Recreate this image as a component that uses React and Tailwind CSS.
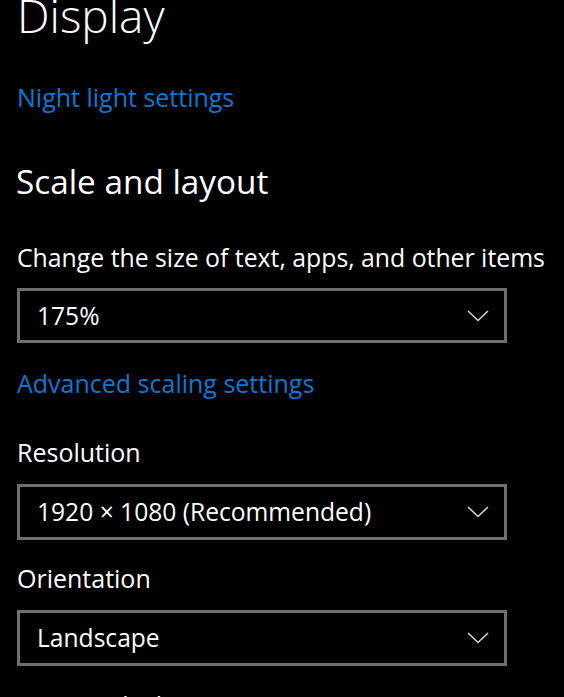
import React from 'react';

const Chevron = () => (
  <svg width="22" height="12" viewBox="0 0 22 12" fill="none" className="shrink-0">
    <polyline points="1,1 11,10.5 21,1" stroke="#d4d4d4" strokeWidth="1.6" />
  </svg>
);

const Select = ({ value, className }) => (
  <div
    className={`flex w-[490px] items-center justify-between border-[3.5px] border-[#6f6f6f] pl-[17px] pr-[15px] ${className}`}
  >
    <span className="text-[24.6px] leading-[32px] text-white">{value}</span>
    <Chevron />
  </div>
);

export default function App() {
  return (
    <div
      className="h-[697px] w-[564px] overflow-hidden bg-black pl-[17px]"
      style={{ fontFamily: '"Open Sans", "Noto Sans", sans-serif' }}
    >
      <div className="flex flex-col">
        <h1 className="mt-[-13px] h-[56px] text-[46px] font-light leading-[56px] text-white">Display</h1>

        <a className="mt-[38px] h-[32px] text-[25px] leading-[32px] text-[#0b79d4]">Night light settings</a>

        <h2 className="ml-[-1px] mt-[46px] h-[44px] text-[33.3px] leading-[44px] text-white">Scale and layout</h2>

        <p className="mt-[38px] h-[32px] text-[24.8px] leading-[32px] text-white">
          Change the size of text, apps, and other items
        </p>
        <Select value="175%" className="mt-[15px] h-[55px]" />

        <a className="mt-[24px] h-[32px] text-[25px] leading-[32px] text-[#0b79d4]">Advanced scaling settings</a>

        <p className="mt-[37px] h-[32px] text-[25px] leading-[32px] text-white">Resolution</p>
        <Select value="1920 × 1080 (Recommended)" className="mt-[16px] h-[56px]" />

        <p className="mt-[22px] h-[32px] text-[25px] leading-[32px] text-white">Orientation</p>
        <Select value="Landscape" className="mt-[16px] h-[56px]" />

        <p className="mt-[23px] h-[32px] text-[25px] leading-[32px] text-white">Rotation lock</p>
      </div>
    </div>
  );
}
